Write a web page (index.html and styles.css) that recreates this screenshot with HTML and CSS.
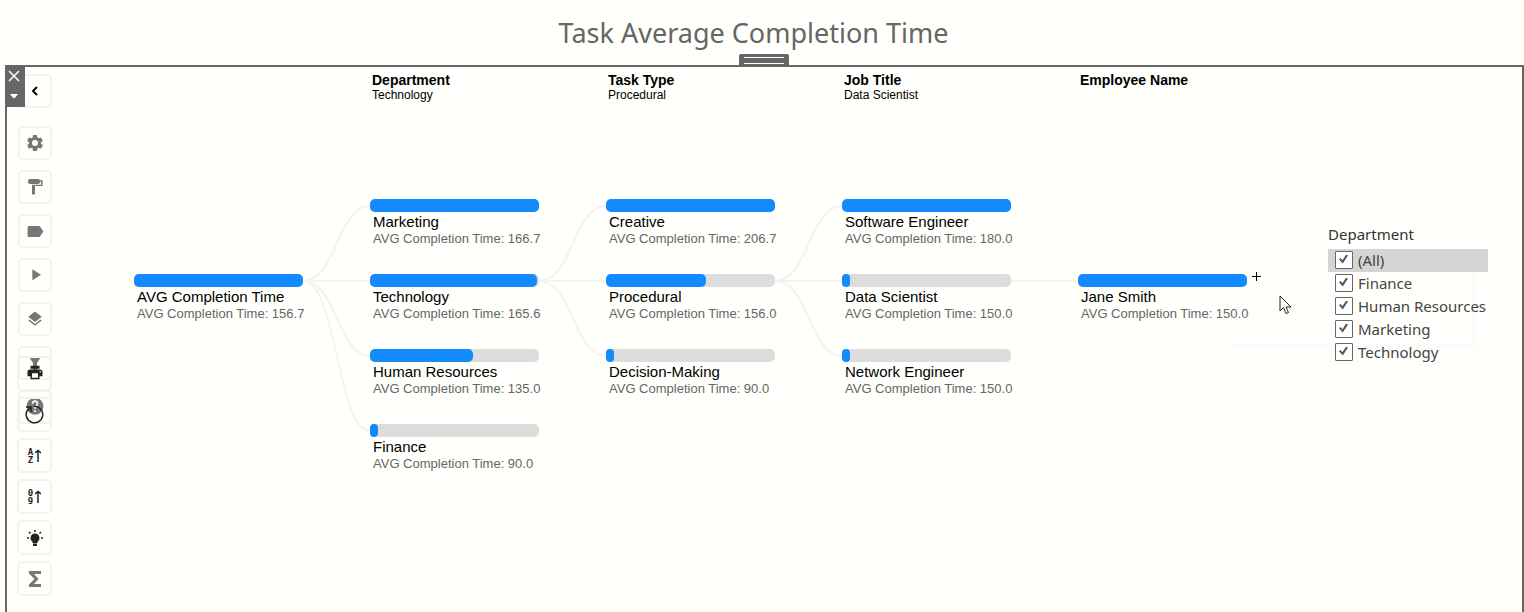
FILE: index.html
```html
<!DOCTYPE html>
<html lang="en">
<head>
<meta charset="utf-8">
<title>Task Average Completion Time</title>
<link rel="stylesheet" href="styles.css">
</head>
<body>
<header class="page-header"><h1>Task Average Completion Time</h1></header>
<main class="panel">
  <button class="drag-handle" aria-label="Move panel"></button>
  <div class="panel-controls">
    <button aria-label="Close"><svg width="12" height="12" viewBox="0 0 12 12" fill="none" stroke="#fff" stroke-width="1.5"><path d="M1 1l10 10M11 1L1 11"/></svg></button>
    <button aria-label="More options"><svg width="8" height="5" viewBox="0 0 8 5" fill="#fff"><path d="M0 0h8L5 4H3z"/></svg></button>
  </div>

  <aside class="sidebar">
    <button class="tool collapse" aria-label="Collapse"><svg width="24" height="24" viewBox="0 0 24 24" fill="none" stroke="#000" stroke-width="2"><path d="M14 8l-4 4 4 4"/></svg></button>
    <div class="tools">
      <button class="tool" aria-label="Settings"><svg width="20" height="20" viewBox="0 0 24 24"><path d="M19.14 12.94c.04-.3.06-.61.06-.94 0-.32-.02-.64-.07-.94l2.03-1.58a.49.49 0 0 0 .12-.61l-1.92-3.32a.488.488 0 0 0-.59-.22l-2.39.96c-.5-.38-1.03-.7-1.62-.94l-.36-2.54a.484.484 0 0 0-.48-.41h-3.84c-.24 0-.43.17-.47.41l-.36 2.54c-.59.24-1.13.57-1.62.94l-2.39-.96c-.22-.08-.47 0-.59.22L2.74 8.87c-.12.21-.08.47.12.61l2.03 1.58c-.05.3-.09.63-.09.94s.02.64.07.94l-2.03 1.58a.49.49 0 0 0-.12.61l1.92 3.32c.12.22.37.29.59.22l2.39-.96c.5.38 1.03.7 1.62.94l.36 2.54c.05.24.24.41.48.41h3.84c.24 0 .44-.17.47-.41l.36-2.54c.59-.24 1.13-.56 1.62-.94l2.39.96c.22.08.47 0 .59-.22l1.92-3.32c.12-.22.07-.47-.12-.61l-2.01-1.58zM12 15.6A3.6 3.6 0 1 1 12 8.400a3.600 3.600 0 0 1 0 7.200z"/></svg></button>
      <button class="tool" aria-label="Format"><svg width="16" height="18" viewBox="0 0 16 18"><rect x="1" y="1" width="12" height="5" rx="2"/><path d="M12 2h3.500v6H8v8.500H5V6.800h9V3.500h-2z"/></svg></button>
      <button class="tool" aria-label="Labels"><svg width="19" height="19" viewBox="0 0 24 24"><path d="M17.630 5.840C17.270 5.330 16.670 5 16 5L4 5.010C2.900 5.010 2 5.900 2 7v10c0 1.100.9 1.990 2 1.990L16 19c.67 0 1.270-.33 1.630-.84L22 12l-4.370-6.160z"/></svg></button>
      <button class="tool" aria-label="Play"><svg width="19" height="19" viewBox="0 0 24 24"><path d="M8 4v14l11-7z"/></svg></button>
      <button class="tool" aria-label="Layers"><svg width="18" height="18" viewBox="0 0 24 24"><path d="M12 18.540l-7.370-5.730L3 14.070l9 7 9-7-1.630-1.270zM12 16l7.360-5.730L21 9l-9-7-9 7 1.630 1.270z"/></svg></button>
      <button class="tool filter-tool" aria-label="Filter"><svg width="12" height="13" viewBox="0 0 12 13"><path d="M0 0h12L8 6v7H4V6z"/></svg></button>
      <button class="tool" aria-label="Help"><svg width="20" height="20" viewBox="0 0 24 24"><path d="M12 1C6.480 1 2 5.480 2 11s4.480 10 10 10 10-4.480 10-10S17.520 1 12 1zm1 17h-2v-2h2v2zm2.070-7.750l-.9.920C13.450 11.900 13 12.500 13 14h-2v-.5c0-1.100.45-2.100 1.170-2.830l1.240-1.260c.37-.36.590-.860.590-1.410 0-1.100-.9-2-2-2s-2 .9-2 2H8c0-2.210 1.790-4 4-4s4 1.790 4 4c0 .88-.36 1.680-.93 2.250z"/></svg></button>
    </div>
    <div class="tools extra-tools">
      <button class="tool" aria-label="Print"><svg width="18" height="18" viewBox="0 0 24 24"><path d="M19 6H5c-1.660 0-3 1.340-3 3v6h4v4h12v-4h4V9c0-1.660-1.340-3-3-3zm-3 11H8v-6h8v6zm3-7c-.55 0-1-.45-1-1s.45-1 1-1 1 .45 1 1-.45 1-1 1zM18 1H6v4h12z"/></svg></button>
      <button class="tool" aria-label="Reset"><svg width="20" height="20" viewBox="0 0 20 20" fill="none" stroke="#222" stroke-width="1.500"><path d="M2.500 5A8.300 8.300 0 1 0 9 1.200M1 2h5v5M6 2L2 6"/></svg></button>
      <button class="tool" aria-label="Sort A to Z"><span class="sort-keys">A<br>Z</span><svg width="6" height="14" viewBox="0 0 6 14" fill="none" stroke="#222" stroke-width="1.500"><path d="M3 13V1M0 4l3-2.500L6 4"/></svg></button>
      <button class="tool" aria-label="Sort 0 to 9"><span class="sort-keys">0<br>9</span><svg width="6" height="14" viewBox="0 0 6 14" fill="none" stroke="#222" stroke-width="1.500"><path d="M3 13V1M0 4l3-2.500L6 4"/></svg></button>
      <button class="tool" aria-label="Insights"><svg width="18" height="18" viewBox="0 0 18 18"><path d="M9 4.500a4.500 4.500 0 0 0-2.500 8.200V14h5v-1.300A4.500 4.500 0 0 0 9 4.500zM7 14.500h4V17H7z"/><path fill="none" stroke="#222" stroke-width="1.500" d="M9 1v2M3 3l1.500 1.500M15 3l-1.500 1.500M1 9h2M15 9h2"/></svg></button>
      <button class="tool sum-tool" aria-label="Total"><svg width="14" height="17" viewBox="0 0 14 17"><path d="M1 1h12v3H6l4.500 5L6 14h7v3H1v-2.500L6.500 9 1 3.500z"/></svg></button>
    </div>
  </aside>

  <section class="tree" aria-label="Decomposition tree">
    <svg class="links" width="1180" height="420" viewBox="0 0 1180 420" aria-hidden="true">
      <path d="M169 214C203 214 203 139 236 139M169 214H236M169 214C203 214 203 289 236 289M169 214C203 214 203 364 236 364"/>
      <path d="M405 214C439 214 439 139 472 139M405 214H472M405 214C439 214 439 289 472 289"/>
      <path d="M641 214C675 214 675 139 708 139M641 214H708M641 214C675 214 675 289 708 289"/>
      <path d="M877 214H944"/>
    </svg>
    <div class="ghost" aria-hidden="true"></div>
    <div class="level single">
      <div class="level-head"></div>
      <div class="node"><div class="bar"><div class="fill" style="width:100%"></div></div><div class="name">AVG Completion Time</div><div class="value">AVG Completion Time: 156.7</div></div>
    </div>
    <div class="level">
      <div class="level-head"><h2>Department</h2><p>Technology</p></div>
      <div class="node"><div class="bar"><div class="fill" style="width:100%"></div></div><div class="name">Marketing</div><div class="value">AVG Completion Time: 166.7</div></div>
      <div class="node"><div class="bar"><div class="fill" style="width:99%"></div></div><div class="name">Technology</div><div class="value">AVG Completion Time: 165.6</div></div>
      <div class="node"><div class="bar"><div class="fill" style="width:61%"></div></div><div class="name">Human Resources</div><div class="value">AVG Completion Time: 135.0</div></div>
      <div class="node"><div class="bar"><div class="fill" style="width:5%"></div></div><div class="name">Finance</div><div class="value">AVG Completion Time: 90.0</div></div>
    </div>
    <div class="level">
      <div class="level-head"><h2>Task Type</h2><p>Procedural</p></div>
      <div class="node"><div class="bar"><div class="fill" style="width:100%"></div></div><div class="name">Creative</div><div class="value">AVG Completion Time: 206.7</div></div>
      <div class="node"><div class="bar"><div class="fill" style="width:59%"></div></div><div class="name">Procedural</div><div class="value">AVG Completion Time: 156.0</div></div>
      <div class="node"><div class="bar"><div class="fill" style="width:5%"></div></div><div class="name">Decision-Making</div><div class="value">AVG Completion Time: 90.0</div></div>
    </div>
    <div class="level">
      <div class="level-head"><h2>Job Title</h2><p>Data Scientist</p></div>
      <div class="node"><div class="bar"><div class="fill" style="width:100%"></div></div><div class="name">Software Engineer</div><div class="value">AVG Completion Time: 180.0</div></div>
      <div class="node"><div class="bar"><div class="fill" style="width:5%"></div></div><div class="name">Data Scientist</div><div class="value">AVG Completion Time: 150.0</div></div>
      <div class="node"><div class="bar"><div class="fill" style="width:5%"></div></div><div class="name">Network Engineer</div><div class="value">AVG Completion Time: 150.0</div></div>
    </div>
    <div class="level single">
      <div class="level-head"><h2>Employee Name</h2></div>
      <div class="node"><div class="bar"><div class="fill" style="width:100%"></div></div><div class="name">Jane Smith</div><div class="value">AVG Completion Time: 150.0</div>
        <button class="expand" aria-label="Expand Jane Smith"><svg width="9" height="9" viewBox="0 0 9 9"><path d="M0 4h9v1H0zM4 0h1v9H4z"/></svg></button>
      </div>
    </div>
    <svg class="pointer" width="13" height="20" viewBox="0 0 13 20" fill="#fff" stroke="#222" aria-hidden="true"><path d="M1 1v15l3.500-3.500L7 18.500l2.500-1L7 12h5z"/></svg>
  </section>

  <fieldset class="filter">
    <legend>Department</legend>
    <label class="option active"><input type="checkbox" checked>(All)</label>
    <label class="option"><input type="checkbox" checked>Finance</label>
    <label class="option"><input type="checkbox" checked>Human Resources</label>
    <label class="option"><input type="checkbox" checked>Marketing</label>
    <label class="option"><input type="checkbox" checked>Technology</label>
  </fieldset>
</main>
</body>
</html>
```
FILE: styles.css
```css
* { box-sizing: border-box; }
html { height: 100%; }
body {
  margin: 0;
  min-height: 100%;
  display: flex;
  flex-direction: column;
  background: #fffffc;
  color: #000;
  font-family: "Liberation Sans", Arial, sans-serif;
}
h1, h2, p { margin: 0; }
button { padding: 0; border: 0; background: none; font: inherit; }
svg { display: block; }

.page-header { height: 65px; padding: 15px 17px 0 0; text-align: center; }
h1 {
  font: 400 27px/36px "Noto Sans", sans-serif;
  color: #666;
}

.panel {
  position: relative;
  flex: 1;
  display: flex;
  align-items: flex-start;
  margin-left: 5px;
  border: 2px solid #666;
  border-bottom: 0;
}
.drag-handle {
  position: absolute;
  top: -13px;
  left: calc(50% - 26px);
  width: 50px;
  height: 12px;
  border-radius: 2px 2px 0 0;
  background: #666;
}
.drag-handle::before {
  content: "";
  position: absolute;
  inset: 3px 5px auto;
  height: 5px;
  border: solid #fff;
  border-width: 1px 0;
}
.panel-controls {
  position: absolute;
  z-index: 2;
  top: -2px;
  left: -2px;
  width: 20px;
  height: 42px;
  background: #666;
}
.panel-controls button {
  display: flex;
  align-items: center;
  justify-content: center;
  width: 18px;
  height: 21px;
}

.sidebar { position: relative; flex: none; width: 127px; padding: 7px 0 0 11px; }
.tools { display: flex; flex-direction: column; gap: 10px; margin-top: 18px; }
.extra-tools { position: absolute; top: 289px; left: 10px; gap: 6px; margin: 0; }
.tool {
  display: flex;
  align-items: center;
  justify-content: center;
  width: 34px;
  height: 34px;
  border: 2px solid #f2f2f1;
  border-radius: 5px;
}
.tool svg { fill: #777; }
.tool.collapse svg { fill: none; }
.extra-tools .tool { width: 35px; height: 35px; }
.extra-tools .tool svg { fill: #222; }
.extra-tools .tool svg[fill="none"] { fill: none; }
.extra-tools .sum-tool svg { fill: #777; }
.filter-tool { align-items: flex-start; padding-top: 9px; }
.sort-keys {
  margin-right: 2px;
  font: 700 9px/8px "DejaVu Sans Mono", monospace;
  color: #222;
}

.tree { position: relative; flex: none; display: flex; }
.links { position: absolute; top: 0; left: 0; fill: none; stroke: #f3f3f2; stroke-width: 2; }
.level { position: relative; width: 236px; }
.level-head { height: 132px; padding: 5px 0 0 2px; }
.level-head h2 { font-size: 14px; line-height: 16px; }
.level-head p { font-size: 12px; line-height: 15px; }
.single .level-head { height: 207px; }
.node { position: relative; height: 75px; }
.bar { width: 169px; height: 13px; border-radius: 5px; background: #ddd; }
.fill { height: 100%; border-radius: 5px; background: #148aff; }
.name { padding-left: 3px; font-size: 15px; line-height: 18px; margin-top: 1px; }
.value { padding-left: 3px; font-size: 13px; line-height: 16px; color: #666; }
.expand { position: absolute; top: -2px; left: 174px; }
.ghost {
  position: absolute;
  top: 205px;
  left: 1096px;
  width: 248px;
  height: 78px;
  border: solid #fafdfc;
  border-width: 0 7px 7px 0;
  border-radius: 6px;
}
.pointer { position: absolute; top: 228px; left: 1145px; }

.filter {
  position: relative;
  flex: none;
  width: 160px;
  min-width: 0;
  margin: 156px 34px 0 auto;
  padding: 0;
  border: 0;
  color: #333;
  font: 15px/23px "Noto Sans", sans-serif;
}
.filter legend { padding: 0 0 4px; line-height: 22px; }
.option { display: flex; align-items: center; gap: 5px; height: 23px; padding-left: 7px; color: #444; white-space: nowrap; }
.option.active { background: #d4d4d4; }
.option input {
  appearance: none;
  flex: none;
  width: 18px;
  height: 18px;
  margin: 0 0 2px;
  border: 1px solid #666;
  border-radius: 1px;
  background: #fff;
}
.option input:checked::after {
  content: "";
  display: block;
  width: 9px;
  height: 9px;
  margin: 3px 0 0 3px;
  background: #555;
  clip-path: polygon(0 52%, 18% 40%, 38% 64%, 80% 0, 100% 10%, 42% 100%);
}
```
